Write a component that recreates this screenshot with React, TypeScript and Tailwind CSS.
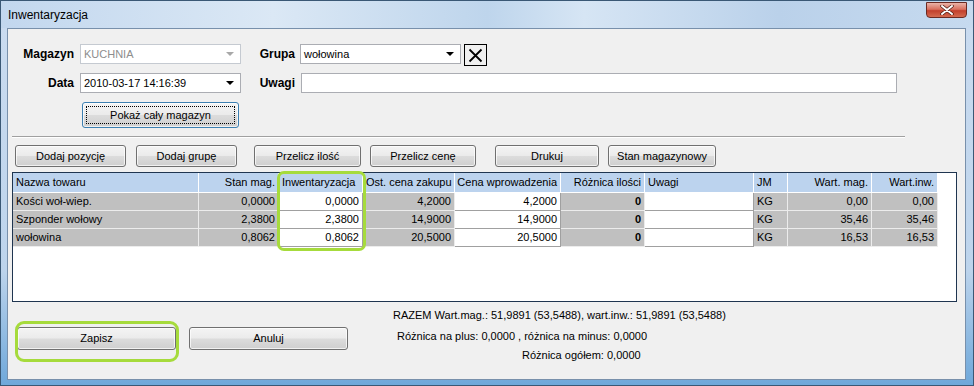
import React from 'react';

type Col = { key: string; label: string; w: string; head: string; cell: string; white?: boolean; bold?: boolean };

const cols: Col[] = [
  { key: 'name', label: 'Nazwa towaru', w: 'w-[186px]', head: 'justify-start', cell: 'justify-start' },
  { key: 'stan', label: 'Stan mag.', w: 'w-[80px]', head: 'justify-end', cell: 'justify-end' },
  { key: 'inw', label: 'Inwentaryzacja', w: 'w-[84px]', head: 'justify-start', cell: 'justify-end', white: true },
  { key: 'ost', label: 'Ost. cena zakupu', w: 'w-[92px]', head: 'justify-start', cell: 'justify-end' },
  { key: 'cena', label: 'Cena wprowadzenia', w: 'w-[106px]', head: 'justify-end', cell: 'justify-end', white: true },
  { key: 'roz', label: 'Różnica ilości', w: 'w-[84px]', head: 'justify-end', cell: 'justify-end', bold: true },
  { key: 'uw', label: 'Uwagi', w: 'w-[109px]', head: 'justify-start', cell: 'justify-start', white: true },
  { key: 'jm', label: 'JM', w: 'w-[34px]', head: 'justify-start', cell: 'justify-start' },
  { key: 'wm', label: 'Wart. mag.', w: 'w-[84px]', head: 'justify-end', cell: 'justify-end' },
  { key: 'wi', label: 'Wart.inw.', w: 'w-[66px]', head: 'justify-end', cell: 'justify-end' },
];

const rows: Record<string, string>[] = [
  { name: 'Kości woł-wiep.', stan: '0,0000', inw: '0,0000', ost: '4,2000', cena: '4,2000', roz: '0', uw: '', jm: 'KG', wm: '0,00', wi: '0,00' },
  { name: 'Szponder wołowy', stan: '2,3800', inw: '2,3800', ost: '14,9000', cena: '14,9000', roz: '0', uw: '', jm: 'KG', wm: '35,46', wi: '35,46' },
  { name: 'wołowina', stan: '0,8062', inw: '0,8062', ost: '20,5000', cena: '20,5000', roz: '0', uw: '', jm: 'KG', wm: '16,53', wi: '16,53' },
];

const btnBg = 'bg-[linear-gradient(180deg,#f4f4f4_0%,#ebebeb_48%,#dcdcdc_52%,#cfcfcf_100%)]';

const Button: React.FC<{ label: string; className: string; focused?: boolean }> = ({ label, className, focused }) => (
  <div
    className={`${className} ${btnBg} relative flex items-center justify-center rounded-[3px] border text-[11px] text-black shadow-[inset_0_0_0_1px_rgba(255,255,255,0.7)] ${
      focused ? 'border-[#3c7fb1]' : 'border-[#707070]'
    }`}
  >
    {focused && <div className="absolute inset-[3px] border border-dotted border-black" />}
    <span>{label}</span>
  </div>
);

const Combo: React.FC<{ value: string; className: string; disabled?: boolean }> = ({ value, className, disabled }) => (
  <div className={`${className} h-[20px] flex items-center bg-white border ${disabled ? 'border-[#c5cad1]' : 'border-[#abadb3]'}`}>
    <span className={`flex-1 pl-[3px] text-[11px] ${disabled ? 'text-[#8d8d8d]' : 'text-black'}`}>{value}</span>
    <svg width="8" height="4" viewBox="0 0 8 4" className="mr-[6px]">
      <path d="M0 0h8L4 4z" fill={disabled ? '#a8a8a8' : '#000'} />
    </svg>
  </div>
);

const Label: React.FC<{ text: string; className: string }> = ({ text, className }) => (
  <div className={`${className} h-[20px] flex items-center justify-end text-[12px] font-bold text-black`}>{text}</div>
);

export default function App() {
  return (
    <div className="relative w-[974px] h-[386px] flex flex-col border border-[#3a5875] bg-[linear-gradient(180deg,#cbdcf0_0%,#bdd4ec_70%,#6fa8da_100%)] font-['Liberation_Sans',Arial,sans-serif] overflow-hidden">
      {/* title bar */}
      <div className="h-[27px] flex items-start justify-between bg-[linear-gradient(90deg,#c2d7ee_0%,#dbe8f5_28%,#bed5ec_50%,#d6e5f4_60%,#bad1ea_80%,#c6daef_100%)]">
        <div className="pl-[7px] pt-[6px] text-[12px] text-black leading-[16px]">Inwentaryzacja</div>
        <div className="mt-[1px] mr-[6px] w-[41px] h-[16px] flex items-center justify-center rounded-b-[4px] border border-[#6b2a22] bg-[linear-gradient(180deg,#eab3a8_0%,#d9705e_45%,#c2402c_55%,#d46a4f_100%)]">
          <svg width="14" height="10" viewBox="0 0 14 10">
            <path d="M2 1L12 9M12 1L2 9" stroke="#4a1a12" strokeWidth="3.4" strokeLinecap="round" />
            <path d="M2 1L12 9M12 1L2 9" stroke="#fff" strokeWidth="2" strokeLinecap="round" />
          </svg>
        </div>
      </div>

      {/* client area */}
      <div className="ml-[6px] mr-[7px] mb-[5px] flex-1 flex flex-col bg-[#f0f0f0] border border-[#7890ab]">
        {/* row 1 */}
        <div className="mt-[15px] h-[20px] flex items-start">
          <Label text="Magazyn" className="w-[66px]" />
          <Combo value="KUCHNIA" className="ml-[6px] w-[161px]" disabled />
          <Label text="Grupa" className="ml-[20px] w-[34px]" />
          <Combo value="wołowina" className="ml-[5px] w-[161px]" />
          <div className="ml-[3px] w-[23px] h-[22px] flex items-center justify-center border border-black bg-[#f0f0f0]">
            <svg width="15" height="15" viewBox="0 0 15 15">
              <path d="M1.5 1.5L13.5 13.5M13.5 1.5L1.5 13.5" stroke="#000" strokeWidth="1.8" />
            </svg>
          </div>
        </div>

        {/* row 2 */}
        <div className="mt-[9px] h-[20px] flex items-start">
          <Label text="Data" className="w-[66px]" />
          <Combo value="2010-03-17 14:16:39" className="ml-[6px] w-[161px]" />
          <Label text="Uwagi" className="ml-[20px] w-[34px]" />
          <div className="ml-[6px] w-[596px] h-[20px] bg-white border border-[#abadb3]" />
        </div>

        {/* row 3 */}
        <div className="mt-[9px] flex">
          <Button label="Pokaż cały magazyn" className="ml-[74px] w-[157px] h-[26px]" focused />
        </div>

        {/* separator */}
        <div className="mt-[8px] ml-[4px] w-[893px] border-t border-[#a0a0a0] border-b border-b-white" />

        {/* buttons */}
        <div className="mt-[7px] h-[22px] flex">
          <Button label="Dodaj pozycję" className="ml-[7px] w-[111px] h-[22px]" />
          <Button label="Dodaj grupę" className="ml-[10px] w-[101px] h-[22px]" />
          <Button label="Przelicz ilość" className="ml-[17px] w-[107px] h-[22px]" />
          <Button label="Przelicz cenę" className="ml-[9px] w-[106px] h-[22px]" />
          <Button label="Drukuj" className="ml-[19px] w-[104px] h-[22px]" />
          <Button label="Stan magazynowy" className="ml-[9px] w-[108px] h-[22px]" />
        </div>

        {/* grid */}
        <div className="mt-[5px] ml-[4px] w-[945px] h-[130px] border border-[#1f3550] bg-white text-[11px] text-black">
          <div className="flex">
            {cols.map((c) => (
              <div
                key={c.key}
                className={`${c.w} ${c.head} h-[20px] flex items-center px-[3px] bg-[#bcd3ee] border-r border-b border-white whitespace-nowrap`}
              >
                {c.label}
              </div>
            ))}
          </div>
          {rows.map((r, i) => (
            <div key={i} className="flex">
              {cols.map((c) => (
                <div
                  key={c.key}
                  className={`${c.w} ${c.cell} h-[18px] flex items-center px-[3px] border-r border-b whitespace-nowrap ${
                    c.white ? 'bg-white border-[#a0a0a0]' : 'bg-[#c0c0c0] border-[#ececec]'
                  } ${c.bold ? 'font-bold' : ''}`}
                >
                  {r[c.key]}
                </div>
              ))}
            </div>
          ))}
        </div>

        {/* bottom */}
        <div className="flex-1 flex">
          <div className="pt-[25px] flex items-start">
            <Button label="Zapisz" className="ml-[9px] w-[159px] h-[23px]" />
            <Button label="Anuluj" className="ml-[13px] w-[159px] h-[23px]" />
          </div>
          <div className="ml-[45px] pt-[7px] flex flex-col text-[11px] leading-[13px] text-black whitespace-nowrap">
            <div>RAZEM Wart.mag.: 51,9891 (53,5488), wart.inw.: 51,9891 (53,5488)</div>
            <div className="mt-[8px] ml-[4px]">Różnica na plus: 0,0000 , różnica na minus: 0,0000</div>
            <div className="mt-[6px] ml-[129px]">Różnica ogółem: 0,0000</div>
          </div>
        </div>
      </div>

      {/* highlight marks */}
      <div className="absolute left-[276px] top-[170px] w-[89px] h-[80px] border-[3px] border-[#a6db3c] rounded-[7px]" />
      <div className="absolute left-[14px] top-[320px] w-[164px] h-[41px] border-[3px] border-[#a6db3c] rounded-[9px]" />
    </div>
  );
}
